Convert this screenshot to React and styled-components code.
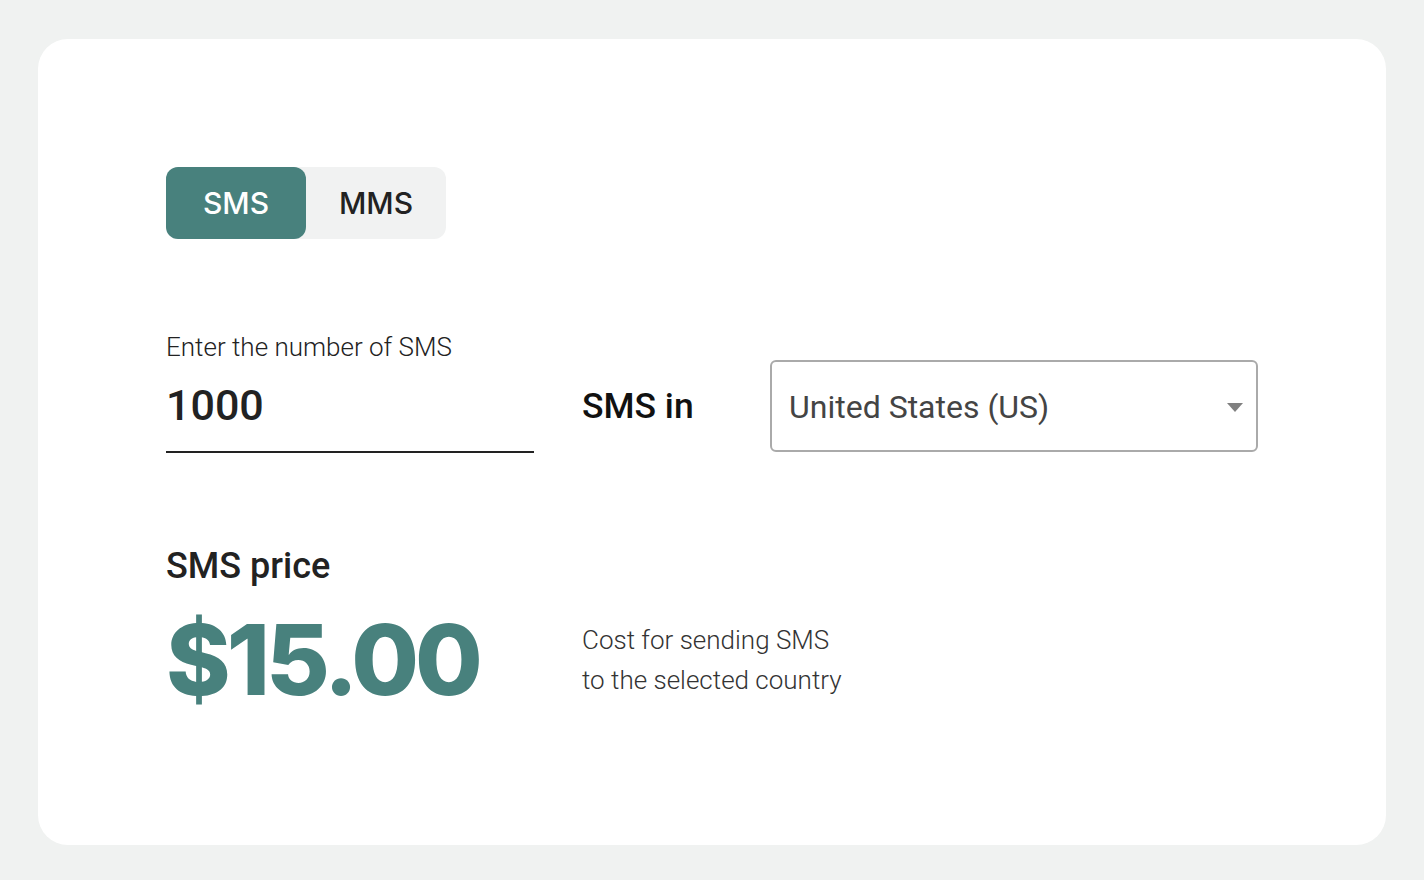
import React from "react";
import styled, { createGlobalStyle } from "styled-components";

const Global = createGlobalStyle`
  html, body { margin: 0; padding: 0; background: #f0f2f1; }
  body { font-family: Roboto, "Noto Sans", sans-serif; }
  * { box-sizing: border-box; }
`;

const Page = styled.div`
  width: 1424px;
  height: 880px;
  padding: 39px 38px 35px 38px;
`;

const Card = styled.div`
  background: #fff;
  border-radius: 30px;
  height: 806px;
  padding: 128px 128px 0 128px;
  display: flex;
  flex-direction: column;
`;

const Toggle = styled.div`
  display: flex;
  width: 280px;
  height: 72px;
  background: #f1f2f2;
  border-radius: 12px;
`;

const ToggleBtn = styled.button`
  width: 140px;
  height: 72px;
  border: none;
  border-radius: 12px;
  background: ${(p) => (p.$active ? "#48817d" : "transparent")};
  color: ${(p) => (p.$active ? "#fff" : "#222")};
  font-family: Inter, Roboto, sans-serif;
  font-size: 30px;
  font-weight: 500;
  padding: 0;
  cursor: pointer;
`;

const FormRow = styled.div`
  display: flex;
  align-items: flex-start;
  margin-top: 92px;
`;

const Field = styled.div`
  width: 368px;
  display: flex;
  flex-direction: column;
`;

const Label = styled.div`
  font-size: 26px;
  font-weight: 300;
  color: #222;
  line-height: 32px;
`;

const NumberInput = styled.div`
  font-size: 43px;
  font-weight: 500;
  color: #222;
  line-height: 50px;
  margin-top: 17px;
  padding-bottom: 21px;
  border-bottom: 2px solid #222;
`;

const InLabel = styled.div`
  font-size: 35.5px;
  font-weight: 500;
  color: #111;
  margin-left: 48px;
  margin-top: 55px;
  line-height: 40px;
  width: 188px;
`;

const Select = styled.div`
  width: 488px;
  height: 92px;
  margin-top: 29px;
  border: 2px solid #aaa;
  border-radius: 6px;
  display: flex;
  align-items: center;
  justify-content: space-between;
  padding: 2px 13px 0 17px;
  font-size: 32px;
  color: #444;
`;

const Arrow = styled.span`
  width: 0;
  height: 0;
  border-left: 8px solid transparent;
  border-right: 8px solid transparent;
  border-top: 9px solid #808080;
`;

const PriceTitle = styled.div`
  font-size: 36px;
  font-weight: 500;
  color: #222;
  margin-top: 91px;
  line-height: 44px;
`;

const PriceRow = styled.div`
  display: flex;
  align-items: center;
  margin-top: 12px;
`;

const Price = styled.div`
  font-family: Inter, Roboto, sans-serif;
  font-size: 98px;
  font-weight: 800;
  letter-spacing: -4px;
  color: #48817d;
  width: 416px;
  line-height: 120px;
`;

const Note = styled.div`
  font-size: 26px;
  font-weight: 300;
  color: #333;
  line-height: 40px;
`;

export default function App() {
  return (
    <>
      <Global />
      <Page>
        <Card>
          <Toggle>
            <ToggleBtn $active>SMS</ToggleBtn>
            <ToggleBtn>MMS</ToggleBtn>
          </Toggle>
          <FormRow>
            <Field>
              <Label>Enter the number of SMS</Label>
              <NumberInput>1000</NumberInput>
            </Field>
            <InLabel>SMS in</InLabel>
            <Select>
              <span>United States (US)</span>
              <Arrow />
            </Select>
          </FormRow>
          <PriceTitle>SMS price</PriceTitle>
          <PriceRow>
            <Price>$15.00</Price>
            <Note>
              Cost for sending SMS
              <br />
              to the selected country
            </Note>
          </PriceRow>
        </Card>
      </Page>
    </>
  );
}
